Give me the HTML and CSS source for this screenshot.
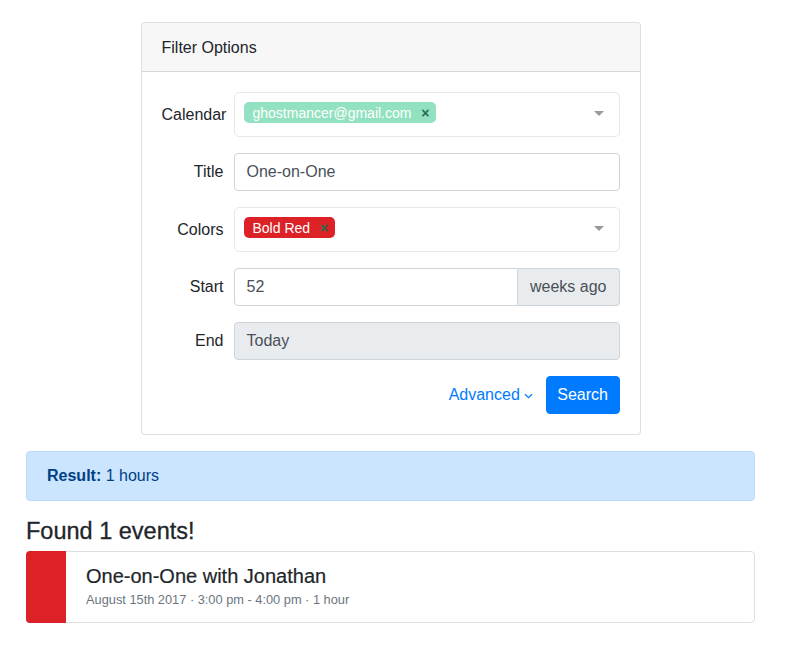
FILE: index.html
```html
<!DOCTYPE html>
<html>
<head>
<meta charset="utf-8">
<link rel="stylesheet" href="styles.css">
</head>
<body>
<div class="page">
  <div class="card filter">
    <div class="card-header">Filter Options</div>
    <div class="card-body">
      <div class="form-row">
        <label class="form-label">Calendar</label>
        <div class="multiselect">
          <span class="tag tag-green">ghostmancer@gmail.com<i class="tag-icon">×</i></span>
          <span class="caret"></span>
        </div>
      </div>
      <div class="form-row">
        <label class="form-label">Title</label>
        <div class="form-control">One-on-One</div>
      </div>
      <div class="form-row">
        <label class="form-label">Colors</label>
        <div class="multiselect">
          <span class="tag tag-red">Bold Red<i class="tag-icon">×</i></span>
          <span class="caret"></span>
        </div>
      </div>
      <div class="form-row">
        <label class="form-label">Start</label>
        <div class="input-group">
          <div class="form-control group-input">52</div>
          <div class="group-append">weeks ago</div>
        </div>
      </div>
      <div class="form-row">
        <label class="form-label">End</label>
        <div class="form-control disabled">Today</div>
      </div>
      <div class="actions">
        <a class="link-btn">Advanced <svg class="chev" width="9" height="6" viewBox="0 0 9 6"><path d="M1 1.2 L4.5 4.6 L8 1.2" fill="none" stroke="#007bff" stroke-width="1.2"/></svg></a>
        <button class="btn-primary">Search</button>
      </div>
    </div>
  </div>

  <div class="alert"><strong>Result:</strong> 1 hours</div>

  <h4 class="found">Found 1 events!</h4>

  <div class="event">
    <div class="event-bar"></div>
    <div class="event-body">
      <h5 class="event-title">One-on-One with Jonathan</h5>
      <div class="event-meta">August 15th 2017 · 3:00 pm - 4:00 pm · 1 hour</div>
    </div>
  </div>
</div>
</body>
</html>
```

FILE: styles.css
```css
* { box-sizing: border-box; }
html, body { margin: 0; padding: 0; background: #fff; }
body {
  font-family: "Liberation Sans", Arial, sans-serif;
  font-size: 16px;
  line-height: 1.5;
  color: #212529;
}
.page {
  width: 729px;
  margin-left: 26px;
  padding-top: 22px;
}
.card {
  border: 1px solid rgba(0,0,0,.125);
  border-radius: 4px;
  background: #fff;
}
.filter {
  width: 500px;
  margin: 0 auto 16px;
}
.card-header {
  padding: 12px 20px 12px 20px;
  background: #f7f7f7;
  border-bottom: 1px solid rgba(0,0,0,.125);
  border-radius: 3px 3px 0 0;
  line-height: 25px;
  height: 49px;
}
.card-body {
  padding: 20px;
}
.form-row {
  display: grid;
  grid-template-columns: 72px 1fr;
  align-items: center;
  margin-bottom: 16px;
}
.form-label {
  text-align: right;
  padding-right: 10px;
  white-space: nowrap;
}
.form-control {
  height: 38px;
  padding: 6px 12px;
  border: 1px solid #ced4da;
  border-radius: 4px;
  color: #495057;
  background: #fff;
}
.form-control.disabled {
  background: #e9ecef;
}
.multiselect {
  position: relative;
  height: 45px;
  padding: 8px 40px 0 9px;
  border: 1px solid #e8e8e8;
  border-radius: 5px;
  background: #fff;
}
.tag {
  position: relative;
  display: inline-block;
  padding: 4px 25px 3px 9px;
  border-radius: 5px;
  color: #fff;
  font-size: 14px;
  line-height: 14px;
  white-space: nowrap;
}
.tag-green { background: #92e1c0; }
.tag-red { background: #dc2127; }
.tag-icon {
  position: absolute;
  right: 0;
  top: 0;
  bottom: 0;
  width: 22px;
  text-align: center;
  font-style: normal;
  font-weight: 700;
  font-size: 14px;
  line-height: 22px;
  color: #266d4d;
}
.caret {
  position: absolute;
  right: 15px;
  top: 18px;
  width: 0;
  height: 0;
  border-left: 5px solid transparent;
  border-right: 5px solid transparent;
  border-top: 5px solid #999;
}
.input-group {
  display: flex;
}
.group-input {
  flex: 1;
  border-radius: 4px 0 0 4px;
}
.group-append {
  height: 38px;
  padding: 6px 12px;
  border: 1px solid #ced4da;
  border-left: none;
  border-radius: 0 4px 4px 0;
  background: #e9ecef;
  color: #495057;
  white-space: nowrap;
}
.actions {
  display: flex;
  justify-content: flex-end;
  align-items: center;
  gap: 13px;
}
.link-btn {
  color: #007bff;
  display: flex;
  align-items: center;
  gap: 4px;
  cursor: pointer;
}
.chev { margin-top: 1px; }
.btn-primary {
  height: 38px;
  padding: 6px 10.5px;
  border: 1px solid #007bff;
  border-radius: 4px;
  background: #007bff;
  color: #fff;
  font-family: inherit;
  font-size: 16px;
  line-height: 1.5;
}
.alert {
  padding: 12px 20px;
  border: 1px solid #b8daff;
  border-radius: 4px;
  background: #cce5ff;
  color: #004085;
  margin-bottom: 16px;
}
.alert strong { font-weight: 700; }
.found {
  margin: 0 0 6px;
  font-size: 23.5px;
  font-weight: 400;
  line-height: 1.2;
  color: #212529;
  -webkit-text-stroke: 0.3px #212529;
}
.event {
  display: flex;
  border: 1px solid rgba(0,0,0,.125);
  border-radius: 4px;
}
.event-bar {
  width: 40px;
  margin: -1px 0 -1px -1px;
  background: #dc2127;
  border-radius: 4px 0 0 4px;
}
.event-body {
  padding: 12px 20px 13px 20px;
}
.event-title {
  margin: 0 0 2px;
  font-size: 20px;
  font-weight: 400;
  line-height: 1.2;
  color: #212529;
  -webkit-text-stroke: 0.2px #212529;
}
.event-meta {
  font-size: 12.8px;
  color: #6c757d;
  line-height: 1.5;
}
```
